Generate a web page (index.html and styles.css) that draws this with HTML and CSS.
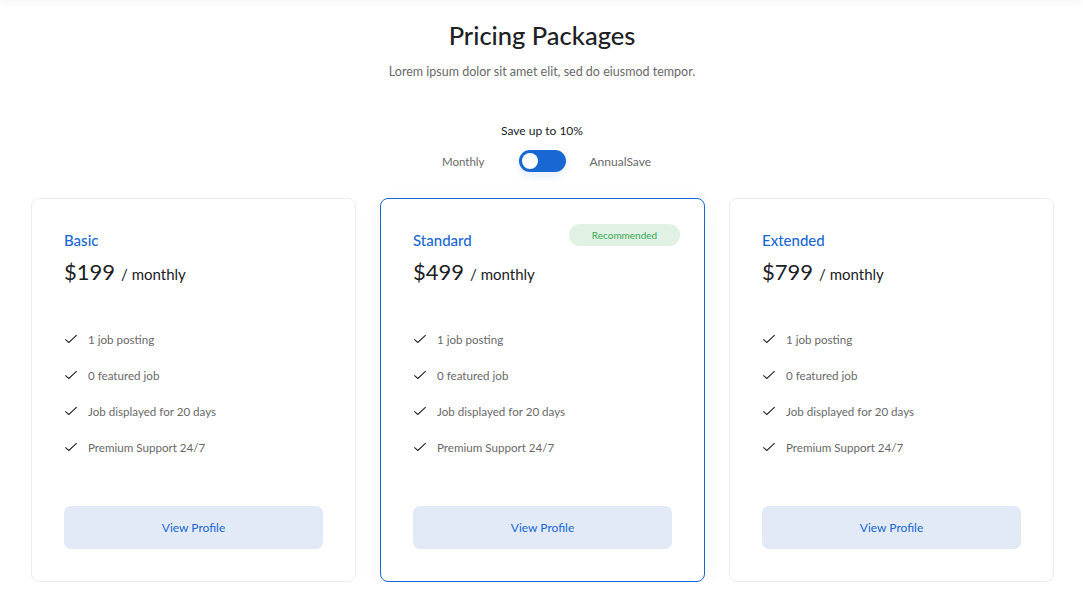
FILE: index.html
```html
<!DOCTYPE html>
<html lang="en">
<head>
<meta charset="utf-8">
<title>Pricing Packages</title>
<link rel="stylesheet" href="styles.css">
</head>
<body>
<div class="topbar"></div>
<section class="pricing">
  <header class="head">
    <h1 class="title">Pricing Packages</h1>
    <p class="subtitle">Lorem ipsum dolor sit amet elit, sed do eiusmod tempor.</p>
  </header>
  <div class="save">Save up to 10%</div>
  <div class="switch-row">
    <span class="switch-label">Monthly</span>
    <span class="switch"><span class="knob"></span></span>
    <span class="switch-label">AnnualSave</span>
  </div>
  <div class="cards">
    <div class="card">
      <div class="card-top">
        <div class="plan">Basic</div>
      </div>
      <div class="price"><span class="amount">$199</span><span class="per">/ monthly</span></div>
      <ul class="features">
        <li><svg class="check" viewBox="0 0 16 16"><path d="M1.5 8.5 L5.5 12 L14.5 3.5"/></svg>1 job posting</li>
        <li><svg class="check" viewBox="0 0 16 16"><path d="M1.5 8.5 L5.5 12 L14.5 3.5"/></svg>0 featured job</li>
        <li><svg class="check" viewBox="0 0 16 16"><path d="M1.5 8.5 L5.5 12 L14.5 3.5"/></svg>Job displayed for 20 days</li>
        <li><svg class="check" viewBox="0 0 16 16"><path d="M1.5 8.5 L5.5 12 L14.5 3.5"/></svg>Premium Support 24/7</li>
      </ul>
      <button class="btn">View Profile</button>
    </div>
    <div class="card featured">
      <div class="card-top">
        <div class="plan">Standard</div>
        <span class="badge">Recommended</span>
      </div>
      <div class="price"><span class="amount">$499</span><span class="per">/ monthly</span></div>
      <ul class="features">
        <li><svg class="check" viewBox="0 0 16 16"><path d="M1.5 8.5 L5.5 12 L14.5 3.5"/></svg>1 job posting</li>
        <li><svg class="check" viewBox="0 0 16 16"><path d="M1.5 8.5 L5.5 12 L14.5 3.5"/></svg>0 featured job</li>
        <li><svg class="check" viewBox="0 0 16 16"><path d="M1.5 8.5 L5.5 12 L14.5 3.5"/></svg>Job displayed for 20 days</li>
        <li><svg class="check" viewBox="0 0 16 16"><path d="M1.5 8.5 L5.5 12 L14.5 3.5"/></svg>Premium Support 24/7</li>
      </ul>
      <button class="btn">View Profile</button>
    </div>
    <div class="card">
      <div class="card-top">
        <div class="plan">Extended</div>
      </div>
      <div class="price"><span class="amount">$799</span><span class="per">/ monthly</span></div>
      <ul class="features">
        <li><svg class="check" viewBox="0 0 16 16"><path d="M1.5 8.5 L5.5 12 L14.5 3.5"/></svg>1 job posting</li>
        <li><svg class="check" viewBox="0 0 16 16"><path d="M1.5 8.5 L5.5 12 L14.5 3.5"/></svg>0 featured job</li>
        <li><svg class="check" viewBox="0 0 16 16"><path d="M1.5 8.5 L5.5 12 L14.5 3.5"/></svg>Job displayed for 20 days</li>
        <li><svg class="check" viewBox="0 0 16 16"><path d="M1.5 8.5 L5.5 12 L14.5 3.5"/></svg>Premium Support 24/7</li>
      </ul>
      <button class="btn">View Profile</button>
    </div>
  </div>
</section>
</body>
</html>
```
FILE: styles.css
```css
* { box-sizing: border-box; }
html, body { margin: 0; padding: 0; background: #fff; }
body {
  font-family: "Lato", "Noto Sans", sans-serif;
  color: #202124;
  overflow: hidden;
}
.topbar {
  height: 0;
  box-shadow: 0 0 8px 2px rgba(0,0,0,0.07);
}
.pricing {
  padding: 20px 30px 0 31px;
}
.head { text-align: center; }
.title {
  margin: 0;
  font-size: 25.5px;
  font-weight: 500;
  line-height: 30px;
  color: #202124;
}
.subtitle {
  margin: 15px 0 0;
  font-size: 12.5px;
  line-height: 14px;
  color: #696969;
}
.save {
  margin-top: 45px;
  text-align: center;
  font-size: 12px;
  line-height: 14px;
  color: #202124;
}
.switch-row {
  margin-top: 12px;
  display: flex;
  justify-content: center;
  align-items: center;
  height: 22px;
  padding-left: 9px;
}
.switch-label {
  font-size: 11.5px;
  color: #696969;
}
.switch-row .switch-label:first-child { margin-right: 34px; }
.switch-row .switch-label:last-child { margin-left: 24px; font-size: 12px; }
.switch {
  width: 47px;
  height: 22px;
  border-radius: 11px;
  background: #1967d2;
  display: flex;
  align-items: center;
  padding-left: 3px;
  box-shadow: 0 4px 10px rgba(25,103,210,0.12);
}
.knob {
  width: 16px;
  height: 16px;
  border-radius: 50%;
  background: #fff;
}
.cards {
  margin-top: 26px;
  display: grid;
  grid-template-columns: repeat(3, 325px);
  gap: 24px;
}
.card {
  border: 1px solid #ecedf2;
  border-radius: 8px;
  padding: 25px 32px 32px 32px;
  height: 384px;
  display: flex;
  flex-direction: column;
  background: #fff;
}
.card.featured {
  border-color: #1967d2;
  box-shadow: 0 6px 20px rgba(64,79,104,0.06);
}
.card-top {
  display: flex;
  justify-content: space-between;
  align-items: flex-start;
  height: 33px;
}
.plan {
  margin-top: 7px;
  font-size: 15px;
  line-height: 18px;
  font-weight: 500;
  color: #1967d2;
}
.badge {
  margin-right: -8px;
  height: 22px;
  width: 111px;
  border-radius: 11px;
  background: #e1f2e5;
  color: #34a853;
  font-size: 10px;
  line-height: 22px;
  text-align: center;
}
.price {
  display: flex;
  align-items: baseline;
  gap: 6px;
}
.amount {
  font-size: 22px;
  line-height: 30px;
  color: #202124;
}
.per {
  font-size: 15px;
  color: #202124;
}
.features {
  list-style: none;
  margin: 34px 0 0;
  padding: 0;
}
.features li {
  display: flex;
  align-items: center;
  height: 36px;
  font-size: 11.6px;
  color: #696969;
}
.check {
  width: 14px;
  height: 14px;
  margin-right: 10px;
  fill: none;
  stroke: #202124;
  stroke-width: 1.2;
}
.btn {
  margin-top: auto;
  height: 43px;
  width: 100%;
  border: none;
  border-radius: 7px;
  background: #e2eaf8;
  color: #1967d2;
  font-family: inherit;
  font-size: 12px;
}
```
